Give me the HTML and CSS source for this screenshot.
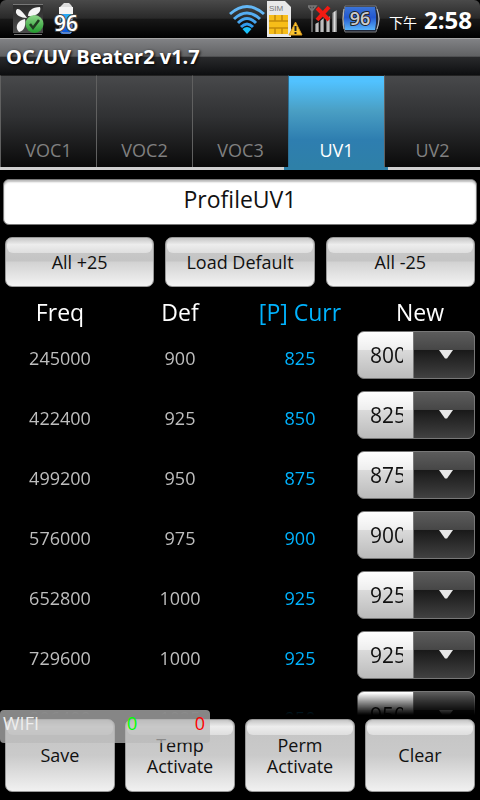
FILE: index.html
```html
<!DOCTYPE html>
<html lang="en">
<head>
<meta charset="utf-8">
<meta name="viewport" content="width=device-width, initial-scale=1">
<title>OC/UV Beater2 v1.7</title>
<link rel="stylesheet" href="styles.css">
</head>
<body>
<header class="status">
  <svg class="icon-fan" width="32" height="34" viewBox="0 0 32 34" aria-hidden="true">
    <defs>
      <linearGradient id="fan-bg" x2="0" y2="1"><stop offset="0" stop-color="#2c2c2c"/><stop offset="1" stop-color="#4b4b4b"/></linearGradient>
      <linearGradient id="green" x2="0" y2="1"><stop offset="0" stop-color="#8ed58a"/><stop offset="1" stop-color="#209a2b"/></linearGradient>
    </defs>
    <path fill="url(#fan-bg)" d="M1 3h30v28H1z"/>
    <path stroke="#777" d="M1 2.500h30M2 32.500h28"/>
    <path fill="#f5f5f5" d="M4 9c1-4 5-2 11 7C9 16 3 13 4 9zM16 14c0-5 4-9 12-9 2 5-4 10-12 9zM13 17c1 5 0 12-6 13-5-5-1-12 6-13z"/>
    <circle cx="22.500" cy="22" r="9" fill="url(#green)"/>
    <path fill="none" stroke="#203c20" stroke-width="2.500" d="M18 22l3 4 6-8"/>
  </svg>
  <svg class="icon-cell" width="26" height="34" viewBox="0 0 26 34" aria-hidden="true">
    <path fill="#ddd" d="M9 3l2-2h5l2 2 2 3v6H6V6z"/>
    <path fill="#f3f3f3" d="M6 5h14v7H6z"/>
    <path fill="#26a8f4" d="M7 12h12v18l-2 2H9l-2-2z"/>
    <path fill="#0b5be0" d="M7 18h12v12l-2 2H9l-2-2z"/>
    <path fill="none" stroke="#aaa" d="M7 12v17l3 2h7l2-2V12"/>
    <text x="13" y="29" class="cell-text">96</text>
  </svg>
  <span class="spacer"></span>
  <svg class="icon-wifi" width="36" height="30" viewBox="0 0 36 30" aria-hidden="true">
    <g fill="none" stroke-width="3">
      <path stroke="#63b7f5" d="M1 10Q18-5 35 10"/>
      <path stroke="#55adf2" d="M5 15Q18 3 31 15"/>
      <path stroke="#47a5ee" d="M9 19Q18 10 27 19"/>
      <path stroke="#319bee" d="M12 23Q18 17 24 23"/>
    </g>
    <path fill="#19c2fb" d="M13.500 25Q18 21 22.500 25L18 30z"/>
  </svg>
  <svg class="icon-sim" width="36" height="37" viewBox="0 0 36 37" aria-hidden="true">
    <path fill="#e8e8e8" d="M0 0h18l6 6v30H0z"/>
    <text x="2" y="10" class="sim-text">SIM</text>
    <path fill="#f7bd19" d="M2 14h19v19H2z"/>
    <path fill="none" stroke="#c48a0b" stroke-width="1.500" d="M2 20h6v-6m0 6h7v-6M2 27h19M8 27v6m7-6v6M15 20h6"/>
    <path fill="#fbc62e" stroke="#d8991f" d="M28.500 21l6.500 13H22z"/>
    <path stroke="#222" stroke-width="2" d="M28.500 25v5m0 1v2"/>
  </svg>
  <svg class="icon-signal" width="30" height="30" viewBox="0 0 30 30" aria-hidden="true">
    <defs><linearGradient id="bar"><stop offset="0" stop-color="#555"/><stop offset=".5" stop-color="#ddd"/><stop offset="1" stop-color="#666"/></linearGradient></defs>
    <path fill="none" stroke="#777" stroke-width="1.500" d="M0 2h8L4 7zM4 2v26"/>
    <g fill="url(#bar)"><path d="M7 20l4-2v10H7z"/><path d="M12 17l4-3v14h-4z"/><path d="M18 15l4-3v16h-4z"/><path d="M24 9l5-3v22h-5z"/></g>
    <path stroke="#f21a12" stroke-width="4" d="M9 4l12 12M21 3L9 16"/>
  </svg>
  <svg class="icon-batt" width="38" height="28" viewBox="0 0 38 28" aria-hidden="true">
    <defs><linearGradient id="blue" x2="0" y2="1"><stop offset="0" stop-color="#3a74d8"/><stop offset=".45" stop-color="#2458d0"/><stop offset="1" stop-color="#5ab5fb"/></linearGradient></defs>
    <path fill="#20283a" stroke="#777" d="M3 1h31l2 7 1 6-1 6-2 7H3L1 20V8z"/>
    <path fill="url(#blue)" d="M3 2h30l1 8v8l-1 7H3l-1-7v-8z"/>
    <path fill="none" stroke="#bbb" d="M35 4q4 10 0 20M2 4q-2 10 0 20"/>
    <text x="18" y="20" class="batt-text">96</text>
  </svg>
  <span class="ampm">下午</span>
  <time class="time">2:58</time>
</header>
<h1 class="title">OC/UV Beater2 v1.7</h1>
<nav class="tabs">
  <button class="tab">VOC1</button>
  <button class="tab">VOC2</button>
  <button class="tab">VOC3</button>
  <button class="tab active" aria-current="page">UV1</button>
  <button class="tab">UV2</button>
</nav>
<main class="content">
  <input class="profile" type="text" value="ProfileUV1" aria-label="Profile name">
  <div class="actions">
    <button class="btn">All +25</button>
    <button class="btn">Load Default</button>
    <button class="btn">All -25</button>
  </div>
  <div class="list">
    <table>
      <thead><tr><th>Freq</th><th>Def</th><th class="curr">[P] Curr</th><th>New</th></tr></thead>
      <tbody>
        <tr><td>245000</td><td>900</td><td class="curr">825</td><td><select aria-label="New 245000"><option>800</option></select></td></tr>
        <tr><td>422400</td><td>925</td><td class="curr">850</td><td><select aria-label="New 422400"><option>825</option></select></td></tr>
        <tr><td>499200</td><td>950</td><td class="curr">875</td><td><select aria-label="New 499200"><option>875</option></select></td></tr>
        <tr><td>576000</td><td>975</td><td class="curr">900</td><td><select aria-label="New 576000"><option>900</option></select></td></tr>
        <tr><td>652800</td><td>1000</td><td class="curr">925</td><td><select aria-label="New 652800"><option>925</option></select></td></tr>
        <tr><td>729600</td><td>1000</td><td class="curr">925</td><td><select aria-label="New 729600"><option>925</option></select></td></tr>
        <tr><td>806400</td><td>1025</td><td class="curr">950</td><td><select aria-label="New 806400"><option>950</option></select></td></tr>
      </tbody>
    </table>
  </div>
</main>
<footer class="footer">
  <button class="btn">Save</button>
  <button class="btn">Temp Activate</button>
  <button class="btn">Perm Activate</button>
  <button class="btn">Clear</button>
  <div class="traffic"><span>WIFI</span><span class="down">0</span><span class="up">0</span></div>
</footer>
</body>
</html>
```
FILE: styles.css
```css
* { box-sizing: border-box; }
body {
  margin: 0;
  height: 100vh;
  display: flex;
  flex-direction: column;
  overflow: hidden;
  background: #000;
  color: #fff;
  font-family: "Open Sans", "Noto Sans", "Noto Sans CJK TC", sans-serif;
}
button, input, select { font-family: inherit; margin: 0; border: 0; }

.status {
  flex: none;
  height: 38px;
  display: flex;
  align-items: center;
  padding: 0 8px 0 12px;
  border-radius: 6px 6px 0 0;
  background: linear-gradient(#4a4a4a, #292929 48%, #181818 50%, #000);
}
.status svg { flex: none; }
.icon-cell { margin-left: 9px; }
.cell-text { font-size: 21px; font-weight: 600; text-anchor: middle; fill: #fff; stroke: #444; stroke-width: 2px; paint-order: stroke; }
.spacer { flex: 1; }
.icon-sim { margin-left: 2px; }
.sim-text { font: 8px "Liberation Sans", sans-serif; fill: #777; }
.icon-signal { margin-left: 5px; }
.icon-batt { margin-left: 4px; }
.batt-text { font-size: 18px; font-weight: 600; text-anchor: middle; fill: #ccc; stroke: #222; stroke-width: 2px; paint-order: stroke; }
.ampm { margin-left: 9px; padding-top: 6px; font: 14px "Noto Sans CJK TC", sans-serif; }
.time { margin-left: 7px; font-size: 24px; font-weight: 700; }

.title {
  flex: none;
  height: 37px;
  margin: 0;
  padding-left: 6px;
  border-top: 1px solid #a5a5a5;
  background: linear-gradient(#818285, #606163 48%, #292a2c 50%, #0d0e10);
  font-size: 20px;
  line-height: 35px;
  text-shadow: 1px 1px 3px #000;
}

.tabs { flex: none; display: flex; height: 95px; border-bottom: 3px solid #d0d0d0; }
.tab {
  flex: 1;
  position: relative;
  padding: 56px 0 0;
  border-left: 1px solid #606060;
  border-top: 1px solid #222;
  background: linear-gradient(#48494b, #303133 45%, #0a0a0a);
  color: #808080;
  font-size: 18px;
}
.tab.active {
  border-left-color: #2e6f94;
  background: linear-gradient(#51c2ff 6%, #4a9fc4 38%, #2e7eb0 70%, #2e80a8);
  color: #fff;
}
.tab.active::after {
  content: "";
  position: absolute;
  left: -5px;
  right: -4px;
  bottom: -3px;
  height: 3px;
  background: #2e80a8;
}

.content { flex: 1; min-height: 0; display: flex; flex-direction: column; padding-top: 9px; }
.profile {
  flex: none;
  height: 46px;
  margin: 0 3px;
  padding: 0 8px 6px;
  border: 1px solid #777;
  border-radius: 6px;
  background: #fff;
  box-shadow: inset 0 2px 2px #bbb;
  color: #111;
  font-size: 23px;
  text-align: center;
}
.actions { flex: none; display: grid; grid-template-columns: repeat(3, 1fr); gap: 11px; padding: 12px 5px 8px; }
.btn {
  position: relative;
  height: 50px;
  padding: 0 7px;
  border: 1px solid #999;
  border-radius: 7px;
  background: linear-gradient(#ccc 0, #c4c4c4 48%, #d2d2d2 50%, #f3f3f3);
  color: #111;
  font-size: 18px;
  line-height: 21px;
  isolation: isolate;
}
.btn::before {
  content: "";
  position: absolute;
  z-index: -1;
  inset: 1px 1px auto;
  height: 14px;
  border-radius: 6px;
  background: linear-gradient(#ccc, #ededed 40%, #dedede);
}

.list {
  flex: 1;
  min-height: 0;
  overflow: hidden;
  mask-image: linear-gradient(#000 calc(100% - 22px), transparent);
}
table { width: 100%; border-collapse: collapse; table-layout: fixed; text-align: center; }
th { height: 30px; padding: 4px 0 0; font-size: 23px; font-weight: 400; line-height: 26px; }
td { height: 60px; padding: 6px 0 0; color: #bebebe; font-size: 18px; }
td:last-child { padding: 0; }
.curr { color: #00b4ff; }
select {
  display: block;
  appearance: none;
  width: 118px;
  height: 48px;
  margin-left: -3px;
  padding: 0 71px 0 12px;
  border: 1px solid #777;
  border-radius: 7px;
  background:
    url("data:image/svg+xml,%3Csvg xmlns='http://www.w3.org/2000/svg' width='14' height='9'%3E%3Cpath fill='%23e8e8e8' d='M0 0h14L8 8.500H6z'/%3E%3C/svg%3E") right 21px top 18px no-repeat,
    linear-gradient(#777, #777) right 60px top / 1px 100% no-repeat,
    linear-gradient(#5c5c5c, #474747 38%, #191919 40%, #414141) right / 61px 100% no-repeat,
    linear-gradient(#fff, #eee 38%, #dadada 40%, #bbb);
  color: #111;
  font-size: 21px;
}

.footer {
  flex: none;
  position: relative;
  display: grid;
  grid-template-columns: repeat(4, 1fr);
  gap: 10px;
  padding: 4px 5px 8px;
}
.footer .btn { height: 73px; background: linear-gradient(#c6c6c6 20%, #cacaca 50%, #f1f1f1); }
.traffic {
  position: absolute;
  left: 0;
  top: -5px;
  width: 210px;
  height: 33px;
  display: grid;
  grid-template-columns: 124px 1fr auto;
  padding: 0 5px 0 3px;
  border-radius: 4px;
  background: rgba(186, 186, 186, .72);
  color: #eee;
  font-size: 18px;
  line-height: 27px;
}
.down { color: #0f0; }
.up { color: #f00; }
```
